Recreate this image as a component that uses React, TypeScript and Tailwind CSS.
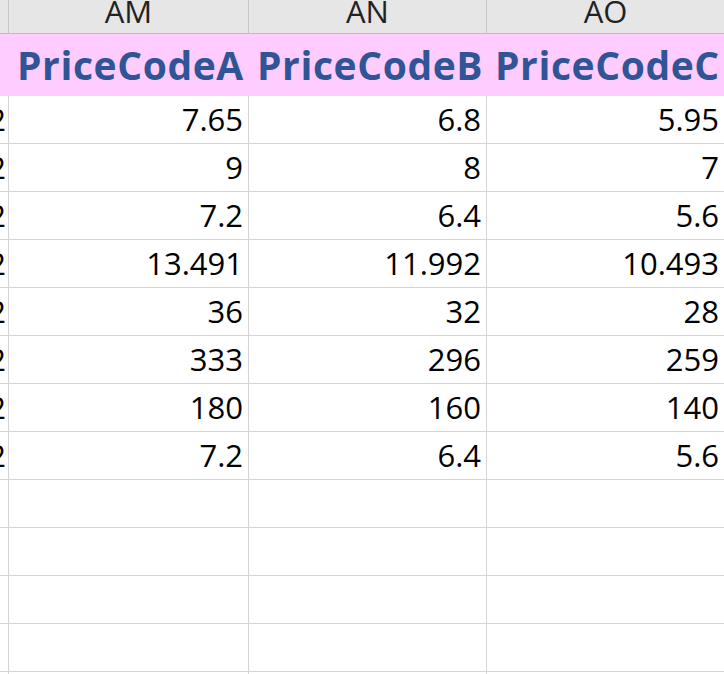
const columns = ["AM", "AN", "AO"];
const headers = ["PriceCodeA", "PriceCodeB", "PriceCodeC"];

const rows: (string[] | null)[] = [
  ["7.65", "6.8", "5.95"],
  ["9", "8", "7"],
  ["7.2", "6.4", "5.6"],
  ["13.491", "11.992", "10.493"],
  ["36", "32", "28"],
  ["333", "296", "259"],
  ["180", "160", "140"],
  ["7.2", "6.4", "5.6"],
  null,
  null,
  null,
  null,
  null,
];

// widths of the partial column on the left + the three visible columns
const widths = ["w-[9px]", "w-[240px]", "w-[238px]", "w-[238px]"];

export default function App() {
  return (
    <div
      className="w-[724px] h-[674px] overflow-hidden bg-white text-black"
      style={{ fontFamily: '"Open Sans", "Noto Sans", sans-serif' }}
    >
      <div className="w-[725px]">
        {/* Column letters */}
        <div className="flex h-[34px] bg-[#e6e6e6] border-b border-[#bcbcbc]">
          <div className={`${widths[0]} shrink-0 border-r border-[#c6c6c6]`} />
          {columns.map((c, i) => (
            <div
              key={c}
              className={`${widths[i + 1]} shrink-0 border-r border-[#c6c6c6] overflow-hidden text-center text-[31px] leading-[31px] text-[#222]`}
            >
              <span className="block -mt-[4px]">{c}</span>
            </div>
          ))}
        </div>

        {/* Header row */}
        <div className="flex h-[62px] bg-[#ffccff]">
          <div className={`${widths[0]} shrink-0`} />
          {headers.map((h, i) => (
            <div
              key={h}
              className={`${widths[i + 1]} shrink-0 pl-[8px] pt-[11px] text-[39px] leading-[39px] tracking-[0.6px] font-bold text-[#2f5597] whitespace-nowrap`}
            >
              {h}
            </div>
          ))}
        </div>

        {/* Data rows */}
        {rows.map((r, ri) => (
          <div key={ri} className="flex h-[48px] border-b border-[#d4d4d4]">
            <div
              className={`${widths[0]} shrink-0 border-r border-[#d4d4d4] overflow-hidden flex justify-end pt-[8px] text-[31px] leading-[31px]`}
            >
              {r && <span className="mr-[2px]">2</span>}
            </div>
            {[0, 1, 2].map((ci) => (
              <div
                key={ci}
                className={`${widths[ci + 1]} shrink-0 border-r border-[#d4d4d4] pr-[5px] pt-[8px] text-right text-[31px] leading-[31px]`}
              >
                {r ? r[ci] : ""}
              </div>
            ))}
          </div>
        ))}
      </div>
    </div>
  );
}
